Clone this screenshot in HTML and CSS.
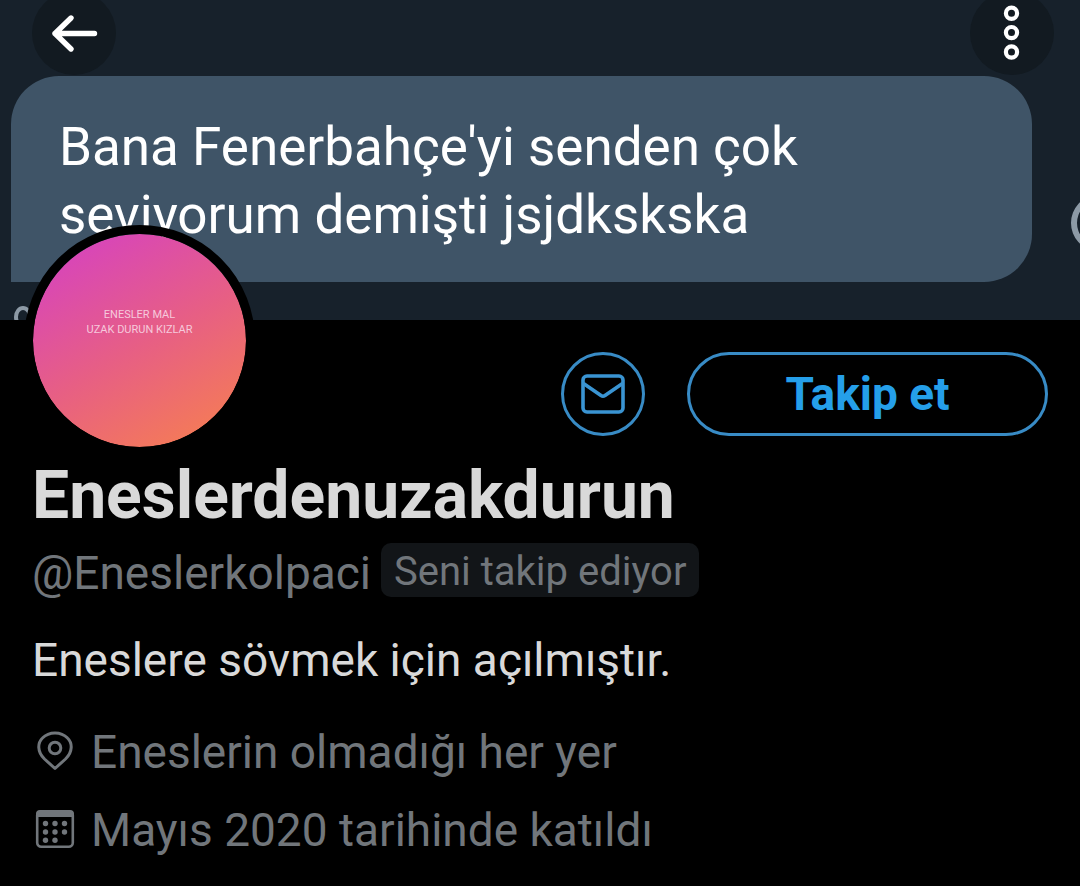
FILE: index.html
```html
<!DOCTYPE html>
<html lang="tr">
<head>
<meta charset="utf-8">
<meta name="viewport" content="width=device-width, initial-scale=1">
<title>Eneslerdenuzakdurun</title>
<link rel="stylesheet" href="styles.css">
</head>
<body>
<header class="banner">
  <p class="bubble">Bana Fenerbahçe'yi senden çok<br>seviyorum demişti jsjdkskska</p>
  <span class="peek peek-ring"></span>
  <span class="peek peek-time"></span>
  <nav class="toolbar">
    <button class="round" type="button" aria-label="Geri">
      <svg width="84" height="84" viewBox="0 0 84 84" fill="none" stroke="#fff" stroke-width="5.4" stroke-linecap="round" stroke-linejoin="round"><path d="M62.500 42.500H23M39 27L23 42.500L39 58"/></svg>
    </button>
    <button class="round" type="button" aria-label="Diğer">
      <svg width="84" height="84" viewBox="0 0 84 84" fill="none" stroke="#fff" stroke-width="4.200"><circle cx="41.500" cy="22.300" r="5.600"/><circle cx="41.500" cy="41.600" r="5.600"/><circle cx="41.500" cy="61" r="5.600"/></svg>
    </button>
  </nav>
</header>
<main class="profile">
  <div class="top">
    <div class="avatar">ENESLER MAL<br>UZAK DURUN KIZLAR</div>
    <div class="actions">
      <button class="message" type="button" aria-label="Mesaj">
        <svg width="44" height="40" viewBox="0 0 44 40" fill="none" stroke="#3a94d2" stroke-width="3.600" stroke-linejoin="round"><rect x="2" y="2" width="40" height="36" rx="4"/><path d="M2.500 9.500L20 21.500Q22 22.800 24 21.500L41.500 9.500"/></svg>
      </button>
      <button class="follow" type="button">Takip et</button>
    </div>
  </div>
  <h1 class="name">Eneslerdenuzakdurun</h1>
  <div class="identity"><span class="handle">@Eneslerkolpaci</span><span class="badge">Seni takip ediyor</span></div>
  <p class="bio">Eneslere sövmek için açılmıştır.</p>
  <ul class="facts">
    <li>
      <svg width="40" height="42" viewBox="0 0 40 42" fill="none" stroke="#71767b" stroke-width="3" stroke-linejoin="round"><path d="M20 37.500L9.500 28C2 20.500 2.500 12 7.500 7C14 .200 26 .200 32.500 7C37.500 12 38 20.500 30.500 28Z"/><circle cx="20" cy="17" r="5.800"/></svg>
      <span>Eneslerin olmadığı her yer</span>
    </li>
    <li>
      <svg width="40" height="42" viewBox="0 0 40 42"><rect x="2.200" y="2.200" width="35.600" height="35.600" rx="4" fill="none" stroke="#71767b" stroke-width="2.600"/><path d="M1 8V5Q1 1 5 1H35Q39 1 39 5V8Z" fill="#71767b"/><g fill="#71767b"><circle cx="10.500" cy="14.500" r="2.700"/><circle cx="20" cy="14.500" r="2.700"/><circle cx="29.500" cy="14.500" r="2.700"/><circle cx="10.500" cy="23" r="2.700"/><circle cx="20" cy="23" r="2.700"/><circle cx="29.500" cy="23" r="2.700"/><circle cx="10.500" cy="31.300" r="2.700"/><circle cx="20" cy="31.300" r="2.700"/></g></svg>
      <span>Mayıs 2020 tarihinde katıldı</span>
    </li>
  </ul>
</main>
</body>
</html>
```
FILE: styles.css
```css
* { box-sizing: border-box; }
body {
  margin: 0;
  background: #000;
  color: #d9d9d9;
  font-family: Roboto, "Liberation Sans", sans-serif;
}
button {
  padding: 0;
  background: none;
  border: 0;
  font: inherit;
  cursor: pointer;
}
svg { display: block; flex: none; }

.banner {
  position: relative;
  height: 320px;
  padding: 76px 48px 0 11px;
  overflow: hidden;
  background: #17212b;
}
.bubble {
  margin: 0;
  padding: 37px 48px 33px;
  border-radius: 48px 48px 48px 0;
  background: #3f5467;
  color: #fff;
  font-size: 53px;
  line-height: 68px;
}
.toolbar {
  position: absolute;
  top: -9px;
  left: 32px;
  right: 26px;
  display: flex;
  justify-content: space-between;
}
.round {
  width: 84px;
  height: 84px;
  border-radius: 50%;
  background: #121a21;
}
.peek {
  position: absolute;
  border-style: solid;
  border-color: #8d9aa6;
  border-radius: 50%;
}
.peek-ring {
  top: 196px;
  right: -41px;
  width: 50px;
  height: 54px;
  border-width: 6px;
}
.peek-time {
  top: 306px;
  left: 14px;
  width: 18px;
  height: 22px;
  border-width: 4px;
}

.profile { padding: 0 32px; }
.top {
  position: relative;
  display: flex;
  justify-content: space-between;
  align-items: flex-start;
}
.avatar {
  width: 231px;
  height: 231px;
  margin: -95px 0 0 -8px;
  padding-top: 73px;
  border: 9px solid #000;
  border-radius: 50%;
  background: linear-gradient(150deg, #d846b8 12%, #e75f84 52%, #f57c55 92%) padding-box;
  color: #f6c9dc;
  font-size: 11px;
  line-height: 15px;
  text-align: center;
  white-space: nowrap;
}
.actions {
  display: flex;
  gap: 42px;
  padding-top: 32px;
}
.message, .follow {
  height: 84px;
  border: 3px solid #388bc5;
  border-radius: 42px;
}
.message {
  width: 84px;
  display: flex;
  align-items: center;
  justify-content: center;
}
.follow {
  width: 361px;
  color: #259fe9;
  font-size: 46px;
  font-weight: 700;
}
.name {
  margin: 2px 0 0;
  font-size: 66px;
  line-height: 76px;
  font-weight: 700;
}
.identity {
  display: flex;
  align-items: flex-start;
  gap: 10px;
  margin-top: 9px;
  color: #71767b;
}
.handle {
  padding-top: 3px;
  font-size: 46px;
  line-height: 54px;
}
.badge {
  padding: 4px 13px 0;
  border-radius: 10px;
  background: #121518;
  font-size: 40px;
  line-height: 50px;
}
.bio {
  margin: 32px 0 0;
  font-size: 46px;
  line-height: 56px;
}
.facts {
  display: grid;
  gap: 22px;
  margin: 36px 0 0;
  padding: 0;
  list-style: none;
  color: #71767b;
  font-size: 46px;
  line-height: 56px;
}
.facts li {
  display: flex;
  align-items: center;
  gap: 16px;
  padding-left: 3px;
}
```
